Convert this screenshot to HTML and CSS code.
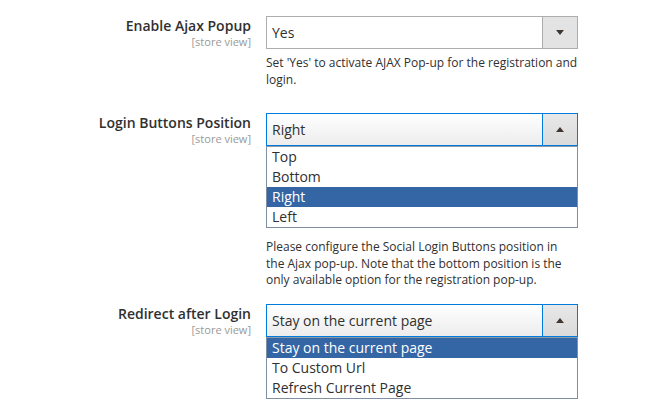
FILE: index.html
```html
<!DOCTYPE html>
<html lang="en">
<head>
    <meta charset="UTF-8">
    <title>Social Login - Ajax Popup</title>
    <link rel="stylesheet" href="styles.css">
</head>
<body>
<div class="config">
    <div class="field field_first">
        <div class="label">
            <span class="title">Enable Ajax Popup</span>
            <span class="scope">[store view]</span>
        </div>
        <div class="control">
            <div class="select">
                <span class="value">Yes</span>
                <span class="toggle"><i class="arrow"></i></span>
            </div>
            <p class="note">Set 'Yes' to activate AJAX Pop-up for the registration and login.</p>
        </div>
    </div>

    <div class="field field_second">
        <div class="label">
            <span class="title">Login Buttons Position</span>
            <span class="scope">[store view]</span>
        </div>
        <div class="control">
            <div class="select open">
                <span class="value">Right</span>
                <span class="toggle"><i class="arrow up"></i></span>
            </div>
            <ul class="options">
                <li>Top</li>
                <li>Bottom</li>
                <li class="selected">Right</li>
                <li>Left</li>
            </ul>
            <p class="note note_wide">Please configure the Social Login Buttons position in the Ajax pop-up. Note that the bottom position is the only available option for the registration pop-up.</p>
        </div>
    </div>

    <div class="field field_third">
        <div class="label">
            <span class="title">Redirect after Login</span>
            <span class="scope">[store view]</span>
        </div>
        <div class="control">
            <div class="select open">
                <span class="value">Stay on the current page</span>
                <span class="toggle"><i class="arrow up"></i></span>
            </div>
            <ul class="options">
                <li class="selected">Stay on the current page</li>
                <li>To Custom Url</li>
                <li>Refresh Current Page</li>
            </ul>
        </div>
    </div>
</div>
</body>
</html>
```

FILE: styles.css
```css
html, body {
    margin: 0;
    padding: 0;
    background: #fff;
}

body {
    font-family: "Open Sans", "Noto Sans", sans-serif;
    color: #303030;
}

.config {
    padding-top: 16px;
    width: 649px;
}

.field {
    display: flex;
    align-items: flex-start;
}

.field_first {
    margin-bottom: 25px;
}

.field_second {
    margin-bottom: 15px;
}

.label {
    width: 251px;
    padding-top: 1px;
    text-align: right;
}

.title {
    display: block;
    font-size: 14px;
    font-weight: 600;
    line-height: 18px;
}

.scope {
    display: block;
    font-size: 11px;
    line-height: 14px;
    color: #999;
}

.control {
    width: 312px;
    margin-left: 15px;
}

.select {
    display: flex;
    height: 33px;
    box-sizing: border-box;
    border: 1px solid #adadad;
    background: #fff;
}

.select.open {
    border-color: #007bdb;
    background: linear-gradient(#fff, #ececec);
}

.value {
    flex: 1;
    padding-left: 5px;
    font-size: 14px;
    line-height: 31px;
}

.toggle {
    display: flex;
    align-items: center;
    justify-content: center;
    width: 34px;
    border-left: 1px solid #adadad;
    background: #e3e3e3;
}

.open .toggle {
    border-left-color: #007bdb;
    background: linear-gradient(#e8e8e8, #dadada);
}

.arrow {
    width: 0;
    height: 0;
    border-left: 4px solid transparent;
    border-right: 4px solid transparent;
    border-top: 5px solid #41362f;
}

.arrow.up {
    border-top: 0;
    border-bottom: 5px solid #41362f;
}

.options {
    margin: 0;
    padding: 0;
    list-style: none;
    border: 1px solid #7f8ea1;
    border-top-color: #8d99a8;
}

.options li {
    height: 20px;
    padding-left: 5px;
    font-size: 14px;
    line-height: 20px;
}

.options li.selected {
    background: #3465a4;
    color: #fff;
}

.note {
    margin: 6px 0 0;
    font-size: 12px;
    line-height: 16.5px;
}

.note_wide {
    margin-top: 11px;
}
```
